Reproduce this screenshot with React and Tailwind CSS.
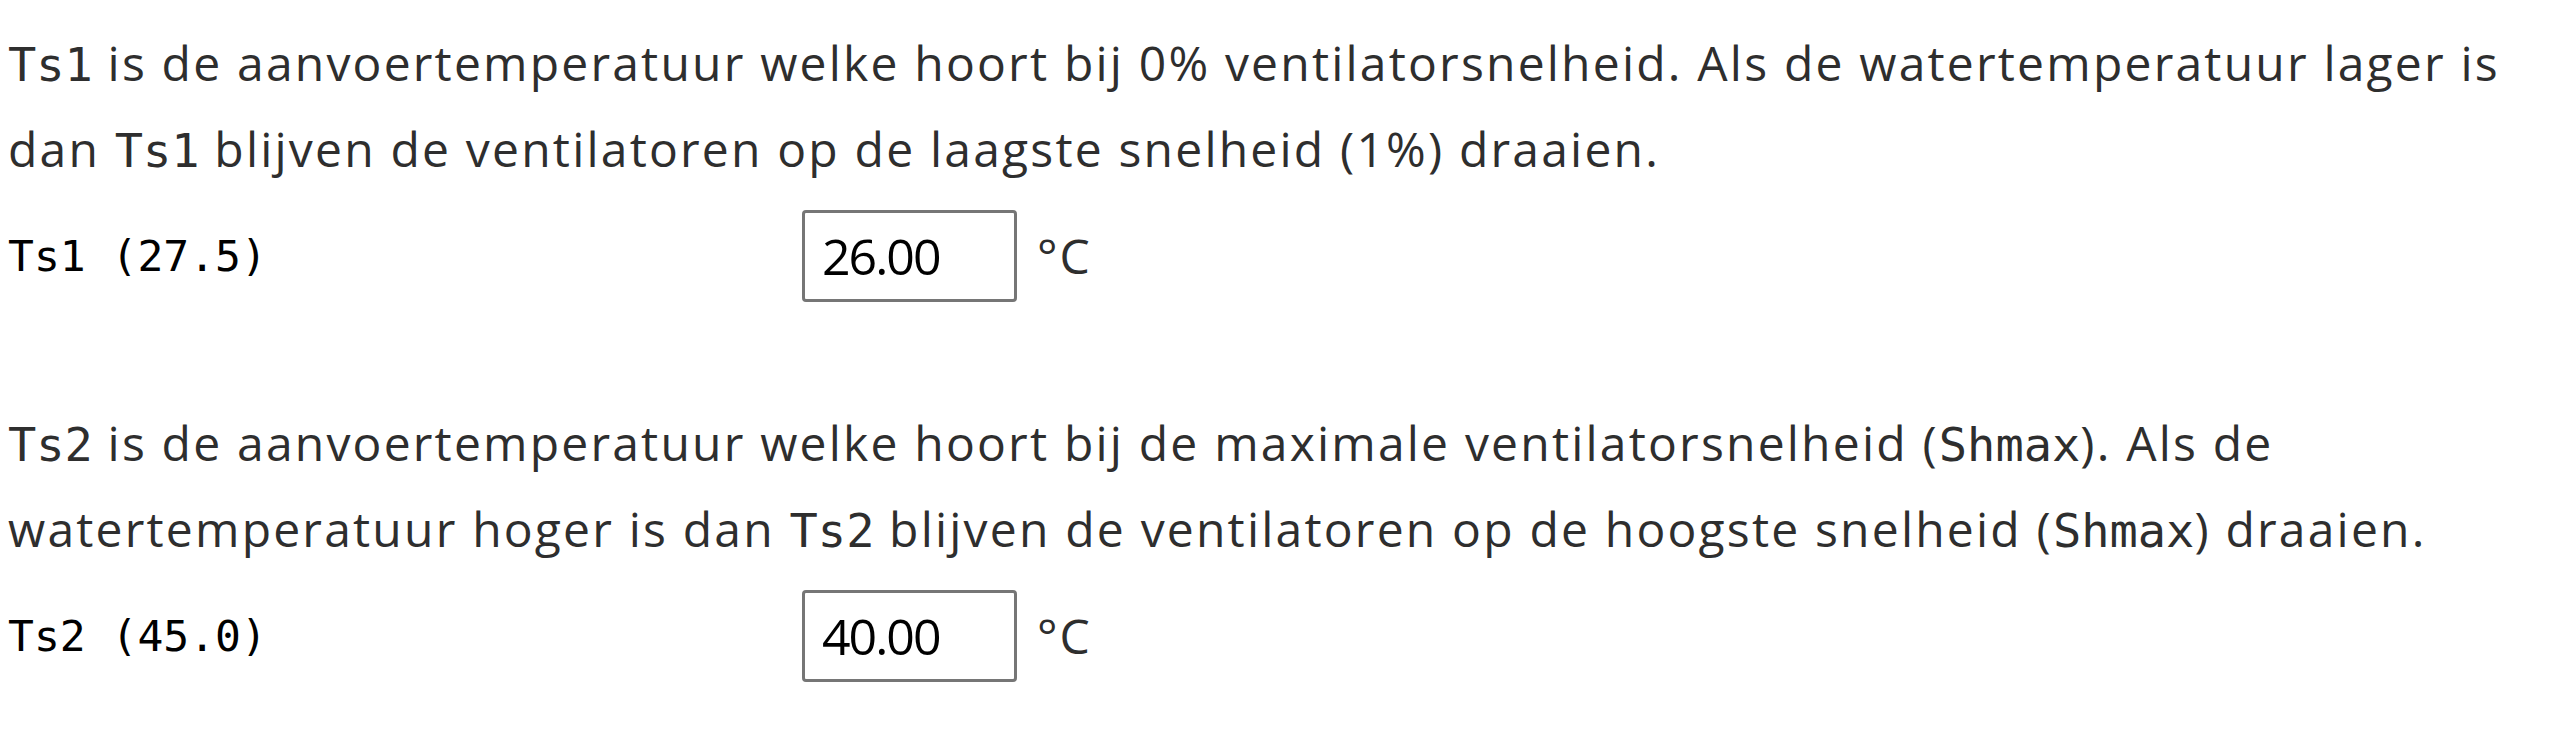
import { useState } from 'react';

const setpoints = [
  {
    id: 'ts1',
    name: 'Ts1',
    current: '27.5',
    initial: '26.00',
    text: [
      { code: 'Ts1' },
      ' is de aanvoertemperatuur welke hoort bij 0% ventilatorsnelheid. Als de watertemperatuur lager is dan ',
      { code: 'Ts1' },
      ' blijven de ventilatoren op de laagste snelheid (1%) draaien.',
    ],
  },
  {
    id: 'ts2',
    name: 'Ts2',
    current: '45.0',
    initial: '40.00',
    text: [
      { code: 'Ts2' },
      ' is de aanvoertemperatuur welke hoort bij de maximale ventilatorsnelheid (',
      { code: 'Shmax' },
      '). Als de watertemperatuur hoger is dan ',
      { code: 'Ts2' },
      ' blijven de ventilatoren op de hoogste snelheid (',
      { code: 'Shmax' },
      ') draaien.',
    ],
  },
];

function Code({ children }) {
  return (
    <code className="font-['DejaVu_Sans_Mono',monospace] text-[47px] leading-none tracking-normal">
      {children}
    </code>
  );
}

function Setpoint({ item, first }) {
  const [value, setValue] = useState(item.initial);

  return (
    <section className={first ? '' : 'mt-[98px]'}>
      <p className="max-w-[2530px] tracking-[2.2px]">
        {item.text.map((part, i) =>
          typeof part === 'string' ? part : <Code key={i}>{part.code}</Code>
        )}
      </p>
      <div className="flex items-center mt-[18px]">
        <label
          htmlFor={item.id}
          className="w-[794px] shrink-0 font-['DejaVu_Sans_Mono',monospace] text-[43px] leading-normal text-black"
        >
          {item.name} ({item.current})
        </label>
        <input
          id={item.id}
          type="text"
          value={value}
          onChange={(e) => setValue(e.target.value)}
          className="w-[215px] h-[92px] border-[3px] border-[#767676] rounded-[4px] pl-[17px] font-['Open_Sans',sans-serif] text-[50px] tracking-[-2px] text-black bg-white outline-none"
        />
        <span className="ml-[20px] tracking-[2px]">°C</span>
      </div>
    </section>
  );
}

export default function App() {
  return (
    <div className="min-h-screen bg-white pl-[8px] pt-[20px] font-['Open_Sans',sans-serif] text-[48px] leading-[86px] text-[#2e2e2e]">
      {setpoints.map((item, i) => (
        <Setpoint key={item.id} item={item} first={i === 0} />
      ))}
    </div>
  );
}
